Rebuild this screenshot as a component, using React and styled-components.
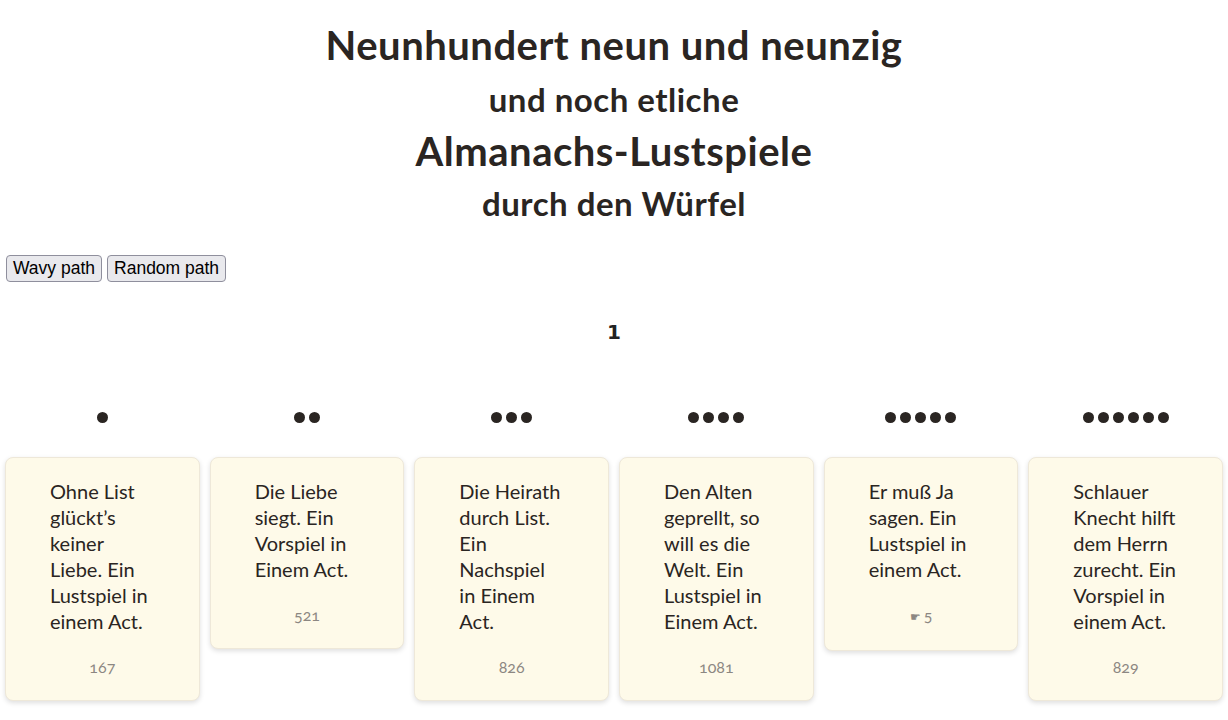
import React from "react";
import styled, { createGlobalStyle } from "styled-components";

const GlobalStyle = createGlobalStyle`
  html, body {
    margin: 0;
    padding: 0;
    background: #fff;
  }
  body {
    font-family: Lato, "Open Sans", sans-serif;
    color: #2a2522;
  }
`;

const Page = styled.div`
  padding: 0 0 20px;
`;

const Titles = styled.header`
  display: flex;
  flex-direction: column;
  align-items: center;
  padding-top: 22px;
`;

const Title = styled.h1`
  margin: 0;
  font-weight: 700;
  font-size: ${(p) => p.$size}px;
  line-height: ${(p) => p.$lh}px;
  letter-spacing: 0.5px;
`;

const Controls = styled.div`
  display: flex;
  gap: 5px;
  padding: 21px 6px 0;
`;

const Button = styled.button`
  font-family: "Liberation Sans", Arial, sans-serif;
  font-size: 17.5px;
  color: #000;
  background: #e9e9ed;
  border: 1px solid #8f8f9d;
  border-radius: 4px;
  height: 27px;
  padding: 0 6px;
  cursor: pointer;
`;

const Round = styled.h3`
  margin: 36px 0 0;
  text-align: center;
  font-family: "DejaVu Sans", Verdana, sans-serif;
  font-size: 20px;
  line-height: 28px;
  font-weight: 700;
  color: #222;
`;

const Grid = styled.div`
  display: grid;
  grid-template-columns: repeat(6, 1fr);
  align-items: start;
  margin-top: 66px;
`;

const Column = styled.div`
  display: flex;
  flex-direction: column;
  align-items: stretch;
  padding: 0 5px;
`;

const Pips = styled.div`
  display: flex;
  justify-content: center;
  gap: 4px;
  height: 11px;
  margin-bottom: 34px;
`;

const Pip = styled.span`
  width: 11px;
  height: 11px;
  border-radius: 50%;
  background: #2a2522;
`;

const Card = styled.div`
  background: #fefae9;
  border: 1px solid #eee8d9;
  border-radius: 8px;
  box-shadow: 0 2px 5px rgba(0, 0, 0, 0.13);
  padding: 20px 44px 24px;
`;

const Play = styled.p`
  margin: 0;
  font-size: 20px;
  line-height: 26px;
  color: #2a2522;
  white-space: nowrap;
`;

const Ref = styled.div`
  margin-top: 24px;
  text-align: center;
  font-size: 16px;
  line-height: 18px;
  color: #8c8782;
  font-variant-numeric: oldstyle-nums;
`;

const Hand = styled.span`
  font-size: 12px;
  margin-right: 3px;
`;

const plays = [
  { lines: ["Ohne List", "glückt’s", "keiner", "Liebe. Ein", "Lustspiel in", "einem Act."], ref: "167" },
  { lines: ["Die Liebe", "siegt. Ein", "Vorspiel in", "Einem Act."], ref: "521" },
  { lines: ["Die Heirath", "durch List.", "Ein", "Nachspiel", "in Einem", "Act."], ref: "826" },
  { lines: ["Den Alten", "geprellt, so", "will es die", "Welt. Ein", "Lustspiel in", "Einem Act."], ref: "1081" },
  { lines: ["Er muß Ja", "sagen. Ein", "Lustspiel in", "einem Act."], ref: "5", pointer: true },
  { lines: ["Schlauer", "Knecht hilft", "dem Herrn", "zurecht. Ein", "Vorspiel in", "einem Act."], ref: "829" },
];

export default function App() {
  return (
    <Page>
      <GlobalStyle />
      <Titles>
        <Title $size={40} $lh={46}>Neunhundert neun und neunzig</Title>
        <Title as="h2" $size={33} $lh={62}>und noch etliche</Title>
        <Title $size={40} $lh={42}>Almanachs-Lustspiele</Title>
        <Title as="h2" $size={33} $lh={62}>durch den Würfel</Title>
      </Titles>
      <Controls>
        <Button>Wavy path</Button>
        <Button>Random path</Button>
      </Controls>
      <Round>1</Round>
      <Grid>
        {plays.map((play, i) => (
          <Column key={i}>
            <Pips>
              {Array.from({ length: i + 1 }).map((_, j) => (
                <Pip key={j} />
              ))}
            </Pips>
            <Card>
              <Play>
                {play.lines.map((line, j) => (
                  <React.Fragment key={j}>
                    {j > 0 && <br />}
                    {line}
                  </React.Fragment>
                ))}
              </Play>
              <Ref>
                {play.pointer && <Hand>☛</Hand>}
                {play.ref}
              </Ref>
            </Card>
          </Column>
        ))}
      </Grid>
    </Page>
  );
}
